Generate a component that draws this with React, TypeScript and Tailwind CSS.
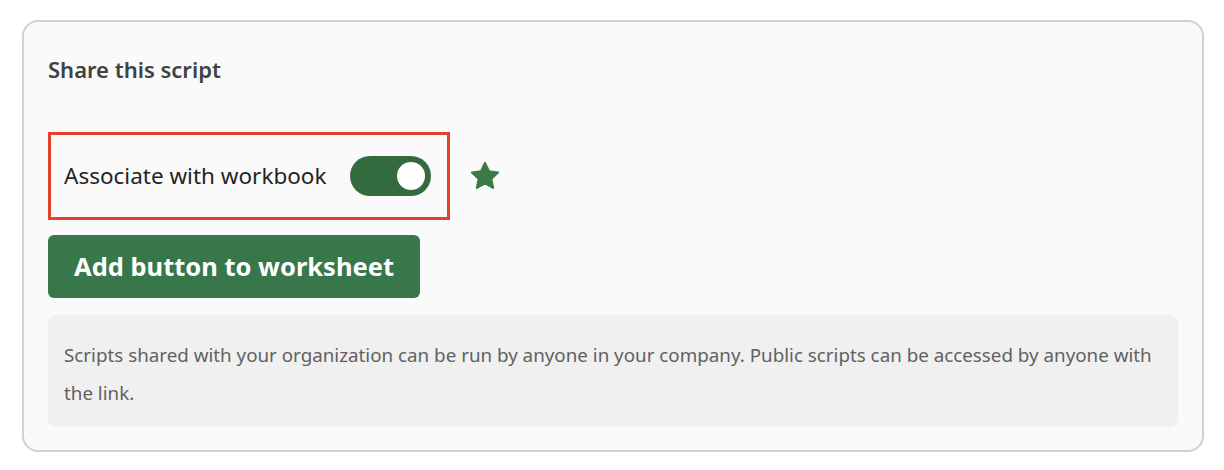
import { useState } from "react";

export default function App() {
  const [on, setOn] = useState(true);

  return (
    <div className="w-[1224px] h-[470px] bg-white pt-[20px] pl-[22px]" style={{ fontFamily: '"Noto Sans", "Open Sans", sans-serif' }}>
      <div className="w-[1182px] h-[432px] rounded-[16px] border-2 border-[#d1d1d1] bg-[#fafafa] pl-[24px] pr-[24px] pt-[32px]">
        <h2 className="text-[22px] font-semibold text-[#424242] leading-[30px]">Share this script</h2>

        <div className="mt-[48px] flex items-center gap-[18px]">
          <div className="w-[402px] h-[88px] border-[3px] border-[#e5402b] flex items-center pl-[13px]">
            <span className="text-[22.5px] text-[#242424] w-[286px] whitespace-nowrap">Associate with workbook</span>
            <button
              onClick={() => setOn(!on)}
              className={`w-[81px] h-[40px] rounded-full flex items-center px-[6px] ${on ? "bg-[#336b3f] justify-end" : "bg-gray-300 justify-start"}`}
            >
              <span className="w-[28px] h-[28px] rounded-full bg-white block" />
            </button>
          </div>
          <svg width="34" height="34" viewBox="0 0 24 24" className="text-[#3a7a47]">
            <path
              fill="currentColor"
              stroke="currentColor"
              strokeWidth="1.5"
              strokeLinejoin="round"
              d="M12 2.8l2.8 5.9 6.4.8-4.7 4.5 1.2 6.4L12 17.2l-5.7 3.2 1.2-6.4-4.7-4.5 6.4-.8z"
            />
          </svg>
        </div>

        <button className="mt-[15px] w-[372px] h-[63px] rounded-[6px] bg-[#37774a] text-white text-[25.5px] font-bold">
          Add button to worksheet
        </button>

        <div className="mt-[17px] w-[1130px] h-[112px] rounded-[8px] bg-[#f0f0f0] px-[16px] pt-[21px]">
          <p className="text-[18.8px] leading-[38px] text-[#616161]">
            Scripts shared with your organization can be run by anyone in your company. Public scripts can be accessed by anyone with the link.
          </p>
        </div>
      </div>
    </div>
  );
}
